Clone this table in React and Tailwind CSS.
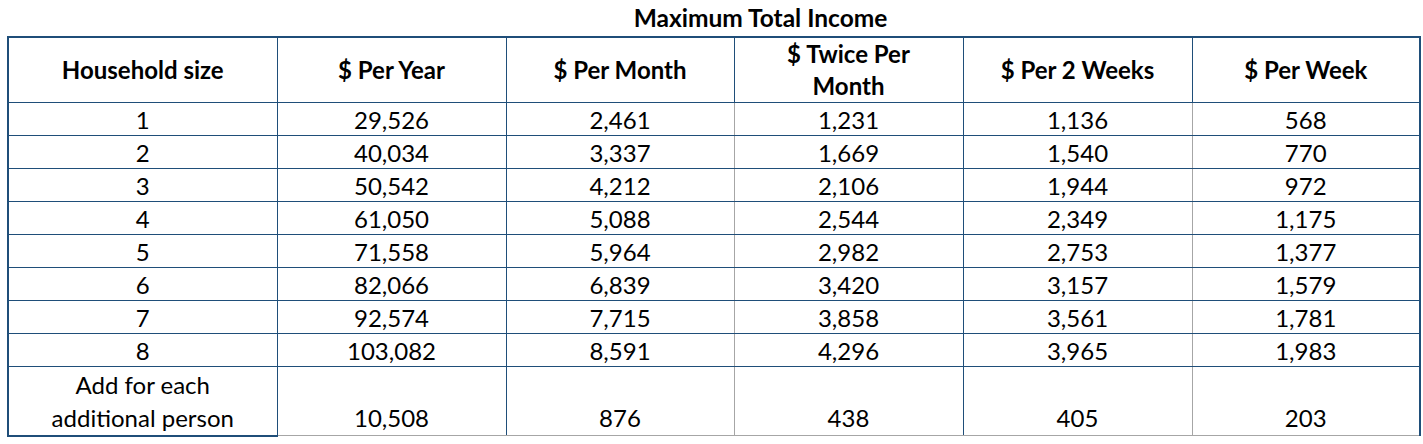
import React from 'react';

const BLUE = 'border-[#1f4e79]';

const rows = [
  ['1', '29,526', '2,461', '1,231', '1,136', '568'],
  ['2', '40,034', '3,337', '1,669', '1,540', '770'],
  ['3', '50,542', '4,212', '2,106', '1,944', '972'],
  ['4', '61,050', '5,088', '2,544', '2,349', '1,175'],
  ['5', '71,558', '5,964', '2,982', '2,753', '1,377'],
  ['6', '82,066', '6,839', '3,420', '3,157', '1,579'],
  ['7', '92,574', '7,715', '3,858', '3,561', '1,781'],
  ['8', '103,082', '8,591', '4,296', '3,965', '1,983'],
];

// right-hand border of each body column
const rightBorder = [
  'border-r border-r-[#1f4e79]',
  'border-r border-r-[#1f4e79]',
  'border-r border-r-[#a6a6a6]',
  'border-r border-r-[#1f4e79]',
  'border-r border-r-[#a6a6a6]',
  'border-r-2 border-r-[#1f4e79]',
];

const headers = ['Household size', '$ Per Year', '$ Per Month', '$ Twice Per Month', '$ Per 2 Weeks', '$ Per Week'];

export default function App() {
  return (
    <div className="w-[1423px] h-[444px] bg-white text-black" style={{ fontFamily: 'Lato, "Open Sans", sans-serif' }}>
      <div className="h-[36px] pl-[98px] flex items-center justify-center text-[24.5px] font-bold leading-none">
        Maximum Total Income
      </div>
      <table className="ml-[7px] w-[1412px] table-fixed border-collapse text-[24px] text-center">
        <colgroup>
          <col className="w-[269px]" />
          <col className="w-[229px]" />
          <col className="w-[228px]" />
          <col className="w-[229px]" />
          <col className="w-[229px]" />
          <col className="w-[228px]" />
        </colgroup>
        <thead>
          <tr className="h-[65px]">
            {headers.map((h, i) => (
              <th
                key={h}
                className={`border ${BLUE} border-t-2 ${i === 0 ? 'border-l-2' : ''} ${i === 5 ? 'border-r-2' : ''} text-[24px] font-bold leading-[32px] align-middle px-6`}
              >
                {h}
              </th>
            ))}
          </tr>
        </thead>
        <tbody>
          {rows.map((r) => (
            <tr key={r[0]} className="h-[33px]">
              {r.map((v, i) => (
                <td
                  key={i}
                  className={`border-y ${BLUE} ${i === 0 ? 'border-l-2 border-l-[#1f4e79]' : ''} ${rightBorder[i]} leading-[31px] p-0`}
                >
                  {v}
                </td>
              ))}
            </tr>
          ))}
          <tr className="h-[69px]">
            <td className={`border-t ${BLUE} border-l-2 border-l-[#1f4e79] border-b-2 border-b-[#1f4e79] ${rightBorder[0]} leading-[33px] align-bottom pb-[1px]`}>
              Add for each
              <br />
              additional person
            </td>
            {['10,508', '876', '438', '405', '203'].map((v, j) => (
              <td
                key={v}
                className={`border-t ${BLUE} border-b border-b-[#a6a6a6] ${rightBorder[j + 1]} leading-[33px] align-bottom pb-[1px]`}
              >
                {v}
              </td>
            ))}
          </tr>
        </tbody>
      </table>
    </div>
  );
}
